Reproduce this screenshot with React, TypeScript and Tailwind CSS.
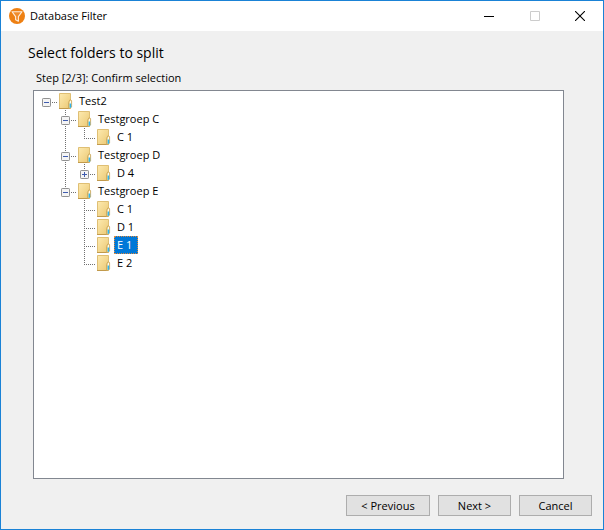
import React, { useState } from 'react';
import clsx from 'clsx';

type TreeNode = { id: string; label: string; children?: TreeNode[] };

const TREE: TreeNode = {
  id: 'root',
  label: 'Test2',
  children: [
    { id: 'c', label: 'Testgroep C', children: [{ id: 'c-c1', label: 'C 1' }] },
    { id: 'd', label: 'Testgroep D', children: [{ id: 'd-d4', label: 'D 4', children: [] }] },
    {
      id: 'e',
      label: 'Testgroep E',
      children: [
        { id: 'e-c1', label: 'C 1' },
        { id: 'e-d1', label: 'D 1' },
        { id: 'e-e1', label: 'E 1' },
        { id: 'e-e2', label: 'E 2' },
      ],
    },
  ],
};

function AppLogo() {
  return (
    <svg width="16" height="16" viewBox="0 0 16 16" aria-hidden="true">
      <circle cx="8" cy="8" r="8" fill="#ee8013" />
      <path d="M3 3.7h10L9.4 8.6v4.6l-2.8-1.5V8.6z" fill="#f08c2c" stroke="#fdebd8" strokeWidth="1.1" strokeLinejoin="round" />
    </svg>
  );
}

function FolderIcon() {
  return (
    <svg width="20" height="18" viewBox="0 0 20 18" className="shrink-0" aria-hidden="true">
      <defs>
        <linearGradient id="folder" x1="0" y1="0" x2="1" y2="1">
          <stop offset="0" stopColor="#fdeab0" />
          <stop offset="1" stopColor="#ebc873" />
        </linearGradient>
      </defs>
      <path d="M3.5 1.5h11v15h-11z" fill="url(#folder)" stroke="#dfbf74" />
      <path d="M3 16.5h11" stroke="#c19a4c" />
      <path d="M12.5 16.2V10.4l1.4-2.6h1l.7 1v6.2l-1.4 1.4z" fill="#efd793" stroke="#c9a55a" strokeWidth="0.8" />
      <path d="M14.5 9v3" stroke="#fdfbf2" />
      <path d="M14.4 11.5v4.3" stroke="#2fb4ee" strokeWidth="1.6" />
    </svg>
  );
}

// one 19px column of the dotted connector lines
function Guide({ top, bottom, branch }: { top: boolean; bottom: boolean; branch: boolean }) {
  return (
    <svg width="19" height="18" viewBox="0 0 19 18" className="shrink-0 overflow-visible" stroke="#707070" strokeDasharray="1 1" aria-hidden="true">
      {top && <path d="M9.5 0V11" />}
      {bottom && <path d="M9.5 10V18" />}
      {branch && <path d="M9 10.5H21" />}
    </svg>
  );
}

function Toggle({ open, label, onClick }: { open: boolean; label: string; onClick: () => void }) {
  return (
    <button type="button" onClick={onClick} aria-label={`${open ? 'Collapse' : 'Expand'} ${label}`} className="absolute left-[5px] top-[6px]">
      <svg width="9" height="9" viewBox="0 0 9 9" className="block">
        <rect x="0.5" y="0.5" width="8" height="8" rx="0.7" fill="#f4f4f4" stroke="#919191" />
        <path d={open ? 'M2 4.5h5' : 'M2 4.5h5M4.5 2v5'} stroke="#3f5cae" />
      </svg>
    </button>
  );
}

type ItemProps = {
  node: TreeNode;
  trail: boolean[];
  last: boolean;
  closed: string[];
  selected: string;
  onToggle: (id: string) => void;
  onSelect: (id: string) => void;
};

// trail holds, per ancestor, whether its vertical line runs on below
function TreeItem({ node, trail, last, closed, selected, onToggle, onSelect }: ItemProps) {
  const isRoot = node.id === 'root';
  const open = !closed.includes(node.id);
  const isSelected = selected === node.id;
  const kids = node.children;

  return (
    <li role="treeitem" aria-selected={isSelected} aria-expanded={kids ? open : undefined}>
      <div className="flex h-[18px]">
        {trail.map((on, i) => <Guide key={i} top={on} bottom={on} branch={false} />)}
        <span className="relative flex shrink-0">
          <Guide top={!isRoot} bottom={!isRoot && !last} branch />
          {kids && <Toggle open={open} label={node.label} onClick={() => onToggle(node.id)} />}
        </span>
        <FolderIcon />
        <button
          type="button"
          onClick={() => onSelect(node.id)}
          className={clsx(
            'h-[18px] pr-[6px] pl-[3px] text-[11px] leading-[18px] whitespace-nowrap',
            isSelected && 'bg-[#0078d7] text-white outline-1 -outline-offset-1 outline-dotted outline-[#e08a3c]',
          )}
        >
          {node.label}
        </button>
      </div>
      {kids && open && (
        <ul role="group">
          {kids.map((k, i) => (
            <TreeItem key={k.id} node={k} trail={[...trail, !isRoot && !last]} last={i === kids.length - 1}
              closed={closed} selected={selected} onToggle={onToggle} onSelect={onSelect} />
          ))}
        </ul>
      )}
    </li>
  );
}

const BTN = 'h-[21px] border border-[#adadad] bg-[#e1e1e1] text-[11px] leading-[18px] hover:border-[#0078d7] hover:bg-[#e5f1fb]';

export default function App() {
  const [closed, setClosed] = useState<string[]>(['d-d4']);
  const [selected, setSelected] = useState('e-e1');

  const toggle = (id: string) =>
    setClosed(c => (c.includes(id) ? c.filter(x => x !== id) : [...c, id]));

  return (
    <div className="flex min-h-screen flex-col border border-[#1a82d6] bg-[#f0f0f0] font-['Open_Sans','Noto_Sans',sans-serif] text-black">
      <header className="flex h-[30px] items-center bg-white pl-2">
        <AppLogo />
        <h1 className="ml-[5px] flex-1 text-[11px] leading-4">Database Filter</h1>
        <button type="button" aria-label="Minimize" className="flex h-full w-[46px] items-center justify-center">
          <svg width="10" height="10" viewBox="0 0 10 10" stroke="#000"><path d="M0 5.5h10" /></svg>
        </button>
        <button type="button" aria-label="Maximize" disabled className="flex h-full w-[45px] items-center justify-center">
          <svg width="10" height="10" viewBox="0 0 10 10" fill="none" stroke="#ccc"><path d="M.5.5h9v9h-9z" /></svg>
        </button>
        <button type="button" aria-label="Close" className="flex h-full w-[46px] items-center justify-center">
          <svg width="10" height="10" viewBox="0 0 10 10" stroke="#000" strokeWidth="1.1"><path d="M0 0l10 10M10 0L0 10" /></svg>
        </button>
      </header>

      <main className="flex flex-1 flex-col pt-3 pr-[39px] pl-8">
        <h2 className="-ml-[5px] text-[14px] leading-5">Select folders to split</h2>
        <p className="mt-[7px] ml-[3px] text-[11px] leading-4">Step [2/3]: Confirm selection</p>
        <div className="mt-1 flex-1 border border-[#828790] bg-white pt-px pl-[3px]">
          <ul role="tree" aria-label="Folders">
            <TreeItem node={TREE} trail={[]} last closed={closed} selected={selected} onToggle={toggle} onSelect={setSelected} />
          </ul>
        </div>
      </main>

      <footer className="flex justify-end gap-2 pt-4 pr-[11px] pb-[13px]">
        <button type="button" className={`${BTN} w-[84px]`}>&lt; Previous</button>
        <button type="button" className={`${BTN} w-[73px]`}>Next &gt;</button>
        <button type="button" className={`${BTN} w-[73px]`}>Cancel</button>
      </footer>
    </div>
  );
}
